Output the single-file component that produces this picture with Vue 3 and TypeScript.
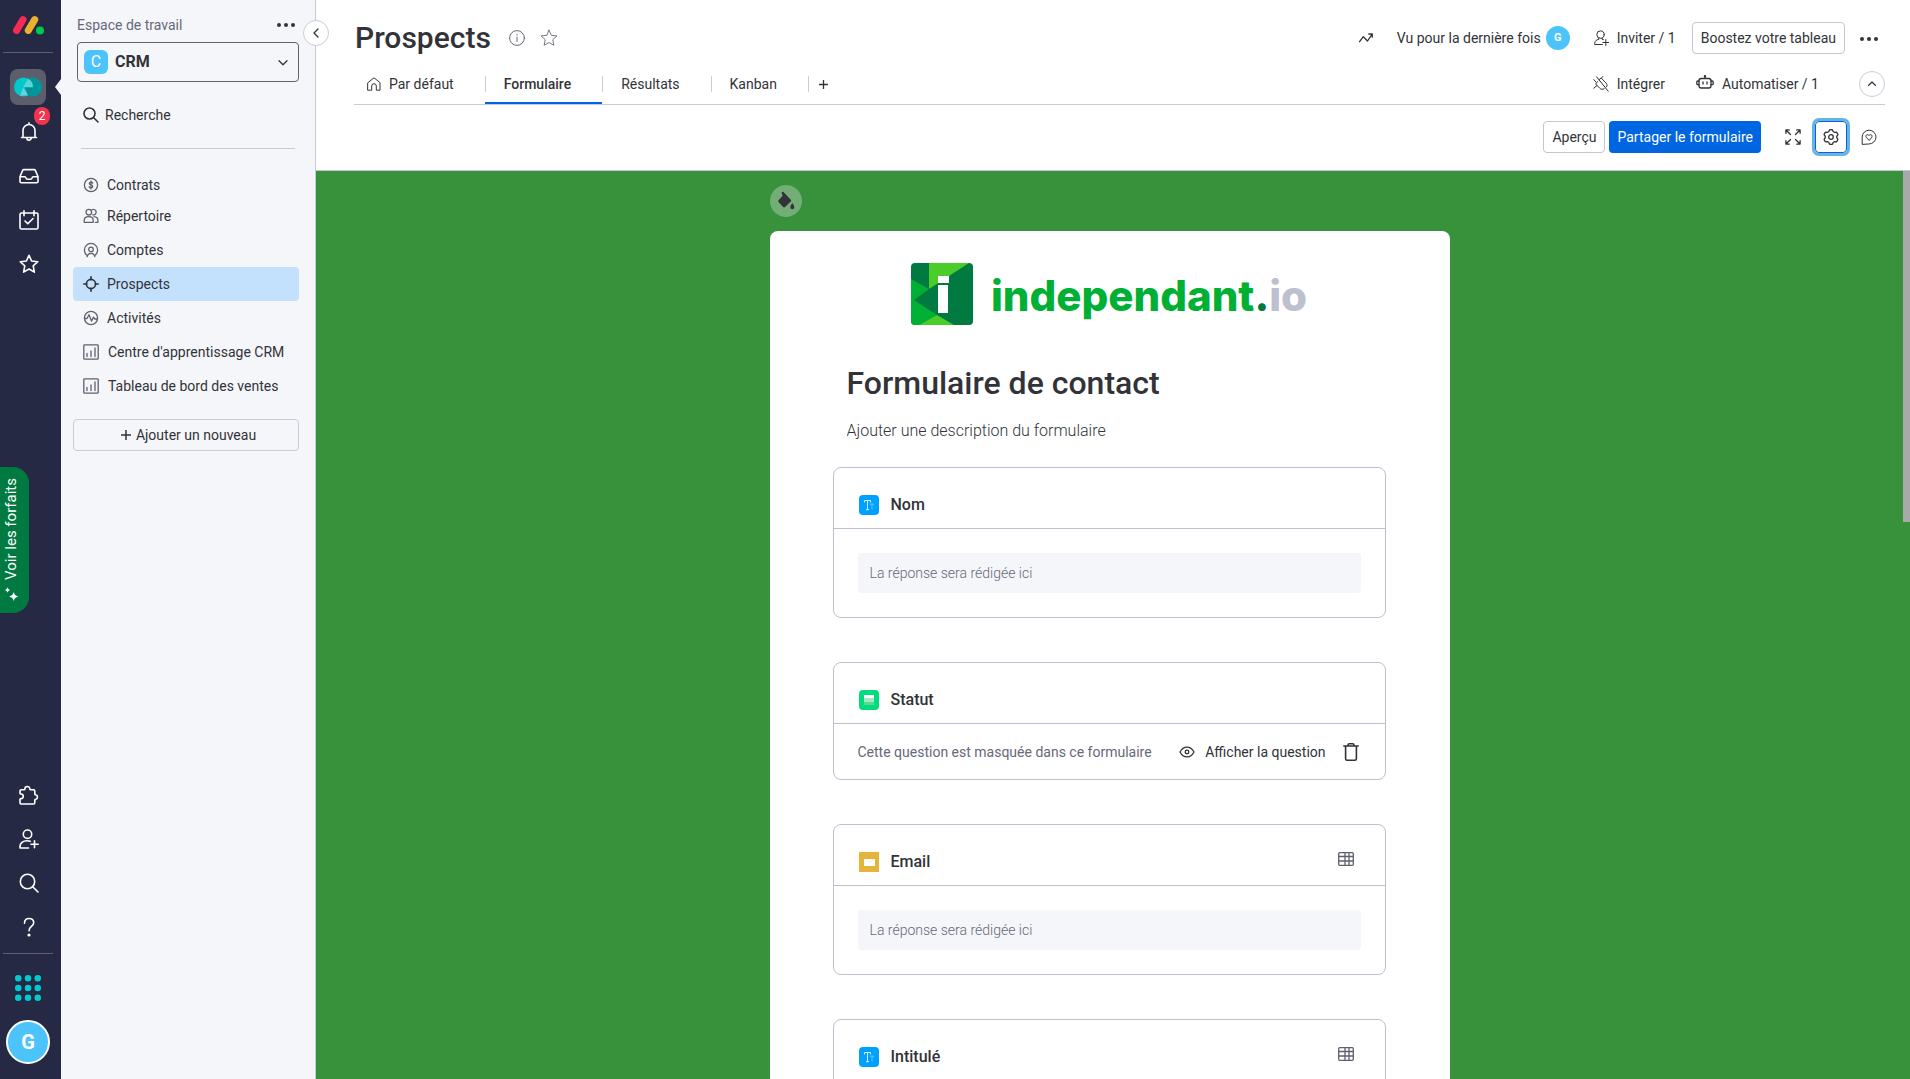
<script setup lang="ts">
import { ref } from 'vue'

interface BoardLink { label: string; icon: string }
interface Question { label: string; kind: 'text' | 'status' | 'email'; hidden?: boolean; table?: boolean }

const workspace = ref('CRM')
const boards: BoardLink[] = [
  { label: 'Contrats', icon: 'deal' },
  { label: 'Répertoire', icon: 'people' },
  { label: 'Comptes', icon: 'account' },
  { label: 'Prospects', icon: 'target' },
  { label: 'Activités', icon: 'pulse' },
  { label: "Centre d'apprentissage CRM", icon: 'chart' },
  { label: 'Tableau de bord des ventes', icon: 'chart' },
]
const current = 'Prospects'

const tabs: string[] = ['Par défaut', 'Formulaire', 'Résultats', 'Kanban']
const activeTab = ref('Formulaire')

const questions: Question[] = [
  { label: 'Nom', kind: 'text' },
  { label: 'Statut', kind: 'status', hidden: true },
  { label: 'Email', kind: 'email', table: true },
  { label: 'Intitulé', kind: 'text', table: true },
]
const appDots = [0, 1, 2].flatMap((r) => [0, 1, 2].map((c) => ({ x: 3 + c * 9, y: 3 + r * 9 })))

// Six-lobed cog centred on (8, 8): each lobe has two outer corners and shares a valley with the next.
function polar(radius: number, degrees: number): string {
  const a = (degrees * Math.PI) / 180
  return `${(8 + radius * Math.cos(a)).toFixed(2)} ${(8 + radius * Math.sin(a)).toFixed(2)}`
}
const cog = 'M' + [0, 1, 2, 3, 4, 5].map((k) => {
  const mid = k * 60 - 90
  return `${polar(5.8, mid - 24)}L${polar(7.3, mid - 11)}Q${polar(7.7, mid)} ${polar(7.3, mid + 11)}L${polar(5.8, mid + 24)}`
}).join('L') + 'z'
</script>

<template>
  <div class="app">
    <nav class="rail" aria-label="Navigation principale">
      <div class="rail-top">
        <svg class="logo" width="32" height="20" viewBox="0 0 32 20" aria-label="monday">
          <path d="M4.600 15.400 L11 4.600" stroke="#f62b54" stroke-width="7" stroke-linecap="round" />
          <path d="M16.300 15.400 L22.700 4.600" stroke="#ecb02f" stroke-width="7" stroke-linecap="round" />
          <circle cx="28" cy="15.600" r="4" fill="#00ca4e" />
        </svg>
        <hr class="rail-line" />
        <button class="product" aria-label="CRM">
          <svg width="28" height="20" viewBox="0 0 28 20">
            <circle cx="18.500" cy="10" r="9.500" fill="#00979c" />
            <circle cx="9.500" cy="10" r="9.500" fill="#00c8cc" />
            <path d="M14 1.700A9.500 9.500 0 0 1 19 10H9.200z" fill="#5bd4d8" />
            <path d="M9.200 10.500 14 18.300 6 18.700z" fill="#6ccfdb" />
            <path d="M11 10.500h8a9.500 9.500 0 0 1-5 7.800z" fill="#0a8c92" />
          </svg>
        </button>
        <button class="rail-btn" aria-label="Notifications">
          <svg width="20" height="20" viewBox="0 0 20 20" class="ln"><path d="M2.500 15.500h15M4 15.500V8.500a6 6 0 0 1 12 0v7M10 2.300V.8M7.800 16a2.200 2.200 0 0 0 4.400 0" /></svg>
          <span class="badge">2</span>
        </button>
        <button class="rail-btn" aria-label="Boîte de réception">
          <svg width="20" height="20" viewBox="0 0 20 20" class="ln"><path d="M1 10.500 3.700 4.400a1.300 1.300 0 0 1 1.200-.8h10.200a1.300 1.300 0 0 1 1.200.8L19 10.500v5a1.300 1.300 0 0 1-1.300 1.300H2.300A1.300 1.300 0 0 1 1 15.500zM1 10.800h4.800c.6 0 .9.4 1 .9.200 1 .9 1.600 1.900 1.600h2.600c1 0 1.700-.6 1.900-1.600.1-.5.4-.9 1-.9H19" /></svg>
        </button>
        <button class="rail-btn" aria-label="Mon travail">
          <svg width="20" height="20" viewBox="0 0 20 20" class="ln"><rect x="1" y="3" width="18" height="16" rx="1.500" /><path d="M5 .800v5M15 .800v5M6 11l2.800 2.800L14 8.500" /></svg>
        </button>
        <button class="rail-btn" aria-label="Favoris">
          <svg width="20" height="20" viewBox="0 0 20 20" class="ln"><path d="m10 1.300 2.600 5.700 6.200.7-4.600 4.200 1.200 6.200L10 15l-5.400 3.100 1.200-6.200L1.200 7.700l6.200-.7z" /></svg>
        </button>
      </div>
      <div class="rail-bottom">
        <button class="rail-btn" aria-label="Applications">
          <svg width="20" height="20" viewBox="0 0 20 20" class="ln"><path d="M2.300 19a1.300 1.300 0 0 1-1.300-1.300V14.300c0-.500.500-.700 1-.700a2.300 2.300 0 0 0 0-4.600c-.500 0-1-.200-1-.700V6c0-.7.500-1.200 1.200-1.200h3c.500 0 .700-.400.700-.800a2.500 2.500 0 0 1 5 0c0 .400.200.800.700.8h3c.700 0 1.200.5 1.200 1.200v3c0 .500.400.700.800.7a2.400 2.400 0 0 1 0 4.700c-.4 0-.8.200-.8.700v2.600a1.300 1.300 0 0 1-1.300 1.300z" /></svg>
        </button>
        <button class="rail-btn" aria-label="Inviter des membres">
          <svg width="20" height="20" viewBox="0 0 20 20" class="ln"><circle cx="8.500" cy="5.200" r="4.200" /><path d="M9.500 19H1v-1.500c0-3.500 3-5.800 7-5.800 1.200 0 2.300.2 3.200.6M15.500 11.800v7M12 15.300h7.200" /></svg>
        </button>
        <button class="rail-btn" aria-label="Rechercher">
          <svg width="20" height="20" viewBox="0 0 20 20" class="ln"><circle cx="8.500" cy="8.500" r="7.200" /><path d="m13.700 13.700 5.300 5.300" /></svg>
        </button>
        <button class="rail-btn" aria-label="Aide">
          <svg width="20" height="20" viewBox="0 0 20 20" class="ln"><path d="M5.500 6.200C5.500 3.500 7.300 1.500 10 1.500s4.700 1.700 4.700 4.200c0 4-4.700 3.600-4.700 8" /><circle cx="10" cy="18" r=".8" /></svg>
        </button>
        <hr class="rail-line" />
        <button class="apps" aria-label="Produits">
          <svg width="26" height="26" viewBox="0 0 24 24"><circle v-for="(d, i) in appDots" :key="i" :cx="d.x" :cy="d.y" r="3" fill="#00cccf" /></svg>
        </button>
        <button class="me" aria-label="Profil">G</button>
      </div>
      <button class="plans">
        <svg width="15" height="15" viewBox="0 0 14 15" fill="#fff"><path d="M9.200 5c.8 2.800 1.700 3.700 4.500 4.500-2.800.8-3.700 1.700-4.500 4.500-.8-2.800-1.700-3.700-4.500-4.500C7.500 8.700 8.400 7.800 9.200 5zM3 .2c.5 1.700 1.100 2.300 2.800 2.800C4.100 3.500 3.500 4.100 3 5.800 2.500 4.100 1.900 3.500.2 3 1.900 2.500 2.500 1.900 3 .2z" /></svg>
        <span>Voir les forfaits</span>
      </button>
    </nav>

    <aside class="side">
      <div class="side-head">
        <label for="workspace">Espace de travail</label>
        <button class="dots" aria-label="Options"><i /><i /><i /></button>
      </div>
      <div class="space">
        <span class="space-mark">C</span>
        <select id="workspace" v-model="workspace"><option>CRM</option></select>
        <svg width="10" height="6" viewBox="0 0 10 6" class="ln"><path d="m1 .8 4 4 4-4" /></svg>
      </div>
      <label class="search">
        <svg width="16" height="16" viewBox="0 0 16 16" class="ln"><circle cx="6.500" cy="6.500" r="5.500" /><path d="m10.700 10.700 4.300 4.300" /></svg>
        <input type="text" placeholder="Recherche" aria-label="Recherche" />
      </label>
      <hr class="side-line" />
      <ul class="boards">
        <li v-for="b in boards" :key="b.label">
          <a href="#" :class="{ on: b.label === current, wide: b.icon === 'chart' }">
            <svg width="16" height="16" viewBox="0 0 16 16" class="ln">
              <template v-if="b.icon === 'deal'"><circle cx="8" cy="8" r="6.600" /><path d="M9.700 6.200C9.500 5.500 8.900 5.200 8 5.200c-1 0-1.700.5-1.700 1.300 0 .9.800 1.200 1.700 1.400.9.200 1.700.6 1.700 1.500 0 .8-.7 1.400-1.700 1.400S6.400 10.400 6.200 9.700M8 4v8" /></template>
              <template v-else-if="b.icon === 'people'"><circle cx="5.800" cy="4.200" r="2.800" /><path d="M9.200 1.600a2.800 2.800 0 1 1 .6 5.300M1.200 14.300v-2c0-2.200 1.900-3.700 4.500-3.700s4.500 1.500 4.500 3.700v2zM11 8.700c2.200.2 3.900 1.600 3.900 3.700v1.900h-2.500" /></template>
              <template v-else-if="b.icon === 'account'"><path d="M4 13.300a6.600 6.600 0 1 1 8 0" /><circle cx="8" cy="7.400" r="2.300" /><path d="M4.200 14.700c.3-2 1.800-3.400 3.800-3.400s3.500 1.400 3.800 3.400" /></template>
              <template v-else-if="b.icon === 'target'"><circle cx="8" cy="8" r="4.600" class="bold" /><path d="M8 .8v3M8 12.200v3M.8 8h3M12.200 8h3" class="bold" /></template>
              <template v-else-if="b.icon === 'pulse'"><circle cx="8" cy="8" r="6.600" /><path d="M2 8.500h2l2-3.800 2.500 6.400 2-4L11.700 9H14" /></template>
              <template v-else><rect x=".800" y=".800" width="14.400" height="14.400" rx=".800" /><path d="M4 9.500v3M8 7v5.500M12 4v8.500" /></template>
            </svg>
            <span>{{ b.label }}</span>
          </a>
        </li>
      </ul>
      <button class="add-new">
        <svg width="10" height="10" viewBox="0 0 10 10" class="ln"><path d="M5 .3v9.400M.3 5h9.400" /></svg>
        Ajouter un nouveau
      </button>
      <button class="fold" aria-label="Réduire le menu">
        <svg width="6" height="10" viewBox="0 0 6 10" class="ln"><path d="m5 1-4 4 4 4" /></svg>
      </button>
    </aside>

    <main class="main">
      <header class="head">
        <div class="title-row">
          <h1>Prospects</h1>
          <button class="icon-btn" aria-label="Informations">
            <svg width="16" height="16" viewBox="0 0 16 16" class="ln thin"><circle cx="8" cy="8" r="7.400" /><path d="M8 7v4.500M8 4.300v.6" /></svg>
          </button>
          <button class="icon-btn" aria-label="Ajouter aux favoris">
            <svg width="18" height="18" viewBox="0 0 20 20" class="ln thin"><path d="m10 1.300 2.600 5.700 6.200.7-4.600 4.200 1.200 6.200L10 15l-5.400 3.100 1.200-6.200L1.200 7.700l6.200-.7z" /></svg>
          </button>
          <div class="title-actions">
            <button class="flat activity" aria-label="Activité">
              <svg width="14" height="10" viewBox="0 0 14 10" class="ln"><path d="m.6 8.700 3.700-5L8.500 8 13 1.300M9.800 1h3.500v3.200" /></svg>
            </button>
            <button class="flat seen">Vu pour la dernière fois <span class="mini">G</span></button>
            <button class="flat invite">
              <svg width="15" height="16" viewBox="0 0 15 16" class="ln thin"><circle cx="6.500" cy="4.600" r="3.700" /><path d="M8.500 14.500H.7v-1.300c0-2.200 1.800-3.500 4.200-3.900v-1M8 8.300v.9l1.500.5M11.800 9.500v6M8.900 12.500h5.800" /></svg>
              Inviter / 1
            </button>
            <button class="outlined boost">Boostez votre tableau</button>
            <button class="dots" aria-label="Plus d'options"><i /><i /><i /></button>
          </div>
        </div>
        <div class="tab-row">
          <div class="tabs" role="tablist">
            <button v-for="t in tabs" :key="t" role="tab" class="tab" :class="{ active: t === activeTab }" :aria-selected="t === activeTab" @click="activeTab = t">
              <svg v-if="t === 'Par défaut'" width="14" height="14" viewBox="0 0 14 14" class="ln thin"><path d="M1 5.600 7 .8l6 4.800v7.600H9.300V9a2.300 2.300 0 0 0-4.600 0v4.200H1z" /></svg>
              {{ t }}
            </button>
            <button class="tab plus" aria-label="Ajouter une vue"><svg width="9" height="9" viewBox="0 0 9 9" class="ln"><path d="M4.500.3v8.400M.3 4.500h8.400" /></svg></button>
          </div>
          <div class="tab-actions">
            <button class="flat">
              <svg width="16" height="16" viewBox="0 0 16 16" class="ln thin"><path d="M6 3.700 8.200 2l5 5.200c1.100 1.200 1.100 2.700.2 3.800M11 12.800c-1.400.9-3.100.6-4.300-.6L2.700 8 4.500 5.600M.8 3.600 3 6M3.600.8 15.200 15.200M.8 12.200l3.200-2.600M8.500 2l1.200-1.400" /></svg>
              Intégrer
            </button>
            <button class="flat auto">
              <svg width="18" height="16" viewBox="0 0 18 16" class="ln"><rect x="3" y="3.500" width="12" height="9.500" rx="2.200" /><path d="M9 3.300V1.600M3 6H1.800a1 1 0 0 0-1 1v1.700a1 1 0 0 0 1 1H3M15 6h1.200a1 1 0 0 1 1 1v1.700a1 1 0 0 1-1 1H15M7 7v2M11 7v2" /><circle cx="9" cy="1.200" r=".600" /></svg>
              Automatiser / 1
            </button>
            <button class="round" aria-label="Réduire l'en-tête"><svg width="8" height="5" viewBox="0 0 8 5" class="ln"><path d="m.7 4.300 3.300-3.300 3.300 3.300" /></svg></button>
          </div>
        </div>
      </header>

      <div class="toolbar">
        <button class="outlined">Aperçu</button>
        <button class="primary">Partager le formulaire</button>
        <button class="icon-btn expand" aria-label="Plein écran">
          <svg width="16" height="16" viewBox="0 0 16 16" class="ln"><path d="M.9 4.300V.9h3.400M11.700.9h3.400v3.400M15.100 11.700v3.400h-3.400M4.300 15.100H.9v-3.400M1.200 1.200l4.300 4.300M14.800 1.200l-4.300 4.300M14.800 14.800l-4.300-4.300M1.200 14.800l4.300-4.300" /></svg>
        </button>
        <button class="gear" aria-label="Paramètres">
          <svg width="16" height="16" viewBox="0 0 16 16" class="ln"><circle cx="8" cy="8" r="2.300" /><path :d="cog" /></svg>
        </button>
        <button class="icon-btn" aria-label="Commentaires">
          <svg width="16" height="16" viewBox="0 0 16 16" class="ln thin"><path d="M1.200 15V8a6.900 6.900 0 1 1 6.900 7z" /><path d="M8 11.200 5.300 8.400c-.8-.9-.5-2.400.8-2.700.8-.2 1.500.2 1.900.9.400-.7 1.100-1.100 1.900-.9 1.300.3 1.600 1.800.8 2.700z" /></svg>
        </button>
      </div>

      <section class="canvas">
        <div class="column">
          <button class="paint" aria-label="Couleur d'arrière-plan">
            <svg width="18" height="20" viewBox="0 0 18 20" fill="#323338"><path d="M4.500 1.500 6 .5l8 8.500c.4.500.3.900 0 1.200L8 16c-.6.600-1.200.6-1.800 0L1.500 11c-.5-.6-.5-1.100 0-1.700l4.200-4.500z" /><path d="M15.300 12c1.200 1.800 2 2.900 2 4.300a2 2 0 0 1-4 0c0-1.400.9-2.500 2-4.300z" /></svg>
          </button>
          <form class="sheet" @submit.prevent>
            <div class="brand">
              <svg width="62" height="62" viewBox="0 0 62 62">
                <clipPath id="tile"><rect width="62" height="62" rx="4" /></clipPath>
                <g clip-path="url(#tile)">
                  <rect width="62" height="62" fill="#007a41" />
                  <path d="M0 16 18 26 3 37 26 52 8 62H0z" fill="#00b035" />
                  <path d="M18 0h40L38 13 18 26z" fill="#4acd29" />
                  <path d="M26 52 43 62H8z" fill="#4acd29" />
                  <path d="M27 13h11v7H27zM27 22h10v28H27z" fill="#fff" />
                </g>
              </svg>
              <span class="word">independant<b>.</b><i>io</i></span>
            </div>
            <h2>Formulaire de contact</h2>
            <input class="desc" type="text" placeholder="Ajouter une description du formulaire" aria-label="Description du formulaire" />

            <fieldset v-for="(q, i) in questions" :key="q.label" class="question">
              <div class="q-head">
                <svg v-if="q.kind === 'text'" width="20" height="20" viewBox="0 0 20 20"><rect width="20" height="20" rx="4" fill="#00a0ff" /><path d="M5.500 7.500v-2h6v2M8.500 5.500v9.200M7 14.700h3" fill="none" stroke="#d9f1ff" /><path d="M11.500 10V9h3v1M13 9v5.500" fill="none" stroke="#5cc2ff" /></svg>
                <svg v-else-if="q.kind === 'status'" width="20" height="20" viewBox="0 0 20 20"><rect width="20" height="20" rx="4" fill="#00dc7d" /><path d="M5 5h10v3H5z" fill="#fff" /><path d="M5 8h10v4H5z" fill="#a3e6bf" /><path d="M5 12h10v3H5z" fill="#5fd693" /></svg>
                <svg v-else width="20" height="20" viewBox="0 0 20 20"><rect width="20" height="20" fill="#e5b53b" /><path d="M5 7h11v7H5z" fill="#fff" /><path d="m6.500 7.500 4 3 4-3" fill="none" stroke="#f3dfa5" stroke-width=".600" /></svg>
                <label :for="'q' + i">{{ q.label }}</label>
                <button v-if="q.table" type="button" class="grid-btn" aria-label="Colonne associée">
                  <svg width="16" height="14" viewBox="0 0 16 14" class="ln"><rect x=".700" y=".700" width="14.600" height="12.600" rx="1" /><path d="M.7 4.500h14.600M.7 9h14.600M7 .7v12.600M11 .7v12.600" /></svg>
                </button>
              </div>
              <div v-if="q.hidden" class="q-hidden">
                <output :id="'q' + i">Cette question est masquée dans ce formulaire</output>
                <button type="button" class="flat show">
                  <svg width="16" height="12" viewBox="0 0 16 12" class="ln"><path d="M1 6c1.600-3 4-4.900 7-4.900S13.400 3 15 6c-1.600 3-4 4.900-7 4.900S2.600 9 1 6z" /><circle cx="8" cy="6" r="1.800" /></svg>
                  Afficher la question
                </button>
                <button type="button" class="icon-btn" aria-label="Supprimer">
                  <svg width="16" height="18" viewBox="0 0 16 18" class="ln bold"><path d="M.8 3h14.400M2.600 3.200v12.500a1.500 1.500 0 0 0 1.500 1.500h7.800a1.500 1.500 0 0 0 1.500-1.500V3.200M5 2.800V2a1.200 1.200 0 0 1 1.200-1.200h3.600A1.200 1.200 0 0 1 11 2v.8" /></svg>
                </button>
              </div>
              <div v-else class="q-body"><input :id="'q' + i" type="text" placeholder="La réponse sera rédigée ici" readonly /></div>
            </fieldset>
          </form>
        </div>
        <div class="thumb"></div>
      </section>
    </main>
  </div>
</template>

<style>
html, body { margin: 0; height: 100%; }
</style>

<style scoped>
* { box-sizing: border-box; }
.app { display: flex; height: 100vh; overflow: hidden; background: #fff; color: #323338; font: 14px/20px Roboto, "Liberation Sans", sans-serif; }
button, input, select { font: inherit; color: inherit; margin: 0; }
button { display: flex; align-items: center; justify-content: center; padding: 0; border: 0; background: none; cursor: pointer; white-space: nowrap; }
svg { display: block; flex: none; }
hr { border: 0; height: 1px; margin: 0; }
.ln { fill: none; stroke: currentColor; stroke-width: 1.300; stroke-linecap: round; stroke-linejoin: round; }
.thin { stroke-width: 1; }
.bold { stroke-width: 1.600; }

.rail { position: relative; flex: none; display: flex; flex-direction: column; justify-content: space-between; width: 61px; padding: 15px 5px 15px 0; background: #252943; color: #fff; }
.rail-top, .rail-bottom { display: flex; flex-direction: column; align-items: center; }
.rail-line { width: 50px; background: #5e616d; }
.logo { margin-bottom: 17px; }
.product { width: 36px; height: 36px; margin: 16px 0 5px; border-radius: 8px; background: #5c5f6b; }
.rail-btn { position: relative; width: 44px; height: 44px; padding: 0 0 1px 1px; }
.rail-btn .ln { stroke-width: 1.600; }
.badge { position: absolute; top: -3px; right: 0; width: 16px; height: 18px; border-radius: 9px; background: #f5334f; font-size: 12px; line-height: 18px; }
.rail-bottom .rail-line { margin-top: 4px; }
.apps { width: 44px; height: 44px; margin: 12px 0 10px; }
.me { width: 44px; height: 44px; border: 2px solid #fff; border-radius: 50%; background: #4cc3fb; font-size: 20px; font-weight: 700; }
.plans { position: absolute; left: 0; top: 467px; flex-direction: column-reverse; gap: 7px; width: 29px; height: 146px; padding: 0 7px 0 0; border-radius: 0 16px 16px 0; background: #007a41; }
.plans span { writing-mode: vertical-rl; rotate: 180deg; font-size: 15px; }

.side { position: relative; flex: none; display: flex; flex-direction: column; width: 255px; padding: 15px 16px 0 12px; border-right: 1px solid #c8cbdc; background: #f5f6fa; }
.side::before { content: ""; position: absolute; left: -6px; top: 79px; border: solid transparent; border-width: 8px 6px 8px 0; border-right-color: #f5f6fa; }
.side-head { display: flex; justify-content: space-between; align-items: center; padding: 0 4px; color: #676879; }
.dots { gap: 3px; height: 20px; color: #323338; }
.dots i { width: 4px; height: 4px; border-radius: 50%; background: #323338; }
.space { position: relative; height: 40px; margin: 7px 0 0 4px; }
.space select { appearance: none; width: 100%; height: 40px; padding: 0 30px 0 37px; border: 1px solid #60626c; border-radius: 4px; background: transparent; font-size: 16px; font-weight: 700; }
.space-mark { position: absolute; left: 7px; top: 8px; width: 24px; height: 24px; border-radius: 6px; background: #4cc3fb; color: #fff; font-size: 16px; line-height: 24px; text-align: center; }
.space svg { position: absolute; right: 11px; top: 18px; pointer-events: none; }
.search { display: flex; align-items: center; gap: 6px; height: 32px; margin: 17px 10px 0; }
.search .ln { stroke-width: 1.600; }
.search input { flex: 1; min-width: 0; padding: 0; border: 0; background: none; }
.search input::placeholder { color: #323338; opacity: 1; }
.side-line { margin: 17px 4px 22px 8px; background: #c8cbdc; }
.boards { margin: 0; padding: 0; list-style: none; }
.boards a { display: flex; align-items: center; gap: 8px; height: 34px; padding: 0 10px; border-radius: 4px; color: #323338; text-decoration: none; white-space: nowrap; }
.boards li:first-child a { height: 28px; }
.boards a.wide { gap: 9px; }
.boards svg { color: #5f616e; }
.boards .on { background: #c3e1fc; }
.boards .on svg { color: #323338; }
.add-new { gap: 5px; height: 32px; margin-top: 16px; padding-left: 5px; border: 1px solid #c8cbdc; border-radius: 4px; }
.add-new .ln { stroke-width: 1.500; }
.fold { position: absolute; z-index: 2; top: 20px; right: -14px; width: 26px; height: 26px; border: 1px solid #c8cbdc; border-radius: 50%; background: #fff; }

.main { flex: 1; min-width: 0; display: flex; flex-direction: column; }
.head { padding: 22px 25px 0 38px; }
.title-row { display: flex; align-items: center; height: 32px; }
h1 { margin: 0 18px 0 1px; font-size: 30px; line-height: 32px; font-weight: 500; }
.icon-btn { color: #323338; }
.title-row > .icon-btn { margin-right: 15px; color: #676879; }
.title-actions { display: flex; align-items: center; margin-left: auto; }
.flat { gap: 8px; height: 32px; }
.activity { margin-right: 24px; }
.seen { gap: 5px; }
.mini { width: 24px; height: 24px; border-radius: 50%; background: #4cc3fb; color: #fff; font-size: 11px; line-height: 24px; font-weight: 700; }
.invite { margin: 0 16px 0 24px; }
.outlined { height: 32px; padding: 0 8px; border: 1px solid #c3c6d4; border-radius: 4px; }
.title-actions .dots { margin: 2px 7px 0 15px; }
.tab-row { display: flex; justify-content: space-between; height: 51px; border-bottom: 1px solid #c8cbdc; }
.tabs { display: flex; }
.tab { position: relative; gap: 8px; height: 50px; padding: 10px 31px 0 19px; }
.tab:first-child { padding: 10px 31px 0 13px; }
.tab:not(:first-child)::before { content: ""; position: absolute; left: 0; top: 22px; width: 1px; height: 16px; background: #c8cbdc; }
.tab.active { font-weight: 500; border-bottom: 2px solid #0065e0; padding-top: 12px; }
.tab.plus { padding: 10px 6px 0 11px; }
.tab-actions { display: flex; align-items: center; padding-top: 9px; }
.auto { margin: 0 40px 0 31px; }
.auto svg { margin-bottom: 2px; }
.round { width: 26px; height: 26px; border: 1px solid #c8cbdc; border-radius: 50%; }

.toolbar { display: flex; align-items: center; justify-content: flex-end; height: 66px; padding: 0 33px 1px 0; border-bottom: 1px solid #c3c6d4; }
.primary { height: 32px; margin: 0 24px 0 4px; padding: 0 8px; border-radius: 4px; background: #0065e0; color: #fff; }
.gear { width: 32px; height: 32px; margin: 0 14px; border: 1px solid #0065e0; border-radius: 4px; box-shadow: 0 0 0 3px #6bb3df; }

.canvas { position: relative; flex: 1; min-height: 0; padding-right: 7px; overflow: hidden; background: #38913b; }
.thumb { position: absolute; top: 0; right: 0; width: 7px; height: 351px; background: #a9a9ab; }
.column { width: 680px; margin: 0 auto; padding-top: 14px; }
.paint { width: 32px; height: 32px; border-radius: 50%; background: #74ae77; }
.sheet { margin-top: 14px; padding: 32px 64px 64px 63px; border-radius: 8px; background: #fff; }
.brand { display: flex; align-items: center; justify-content: center; gap: 18px; height: 62px; }
.word { padding-top: 4px; font: 800 42px/62px Inter, sans-serif; color: #00b035; }
.word b { color: #007a41; font-weight: inherit; }
.word i { color: #bdc0cf; font-style: normal; }
h2 { margin: 38px 0 0 14px; font-size: 32px; line-height: 40px; font-weight: 500; }
.desc { display: block; width: 525px; height: 24px; margin: 15px 0 25px 14px; padding: 0; border: 0; font-size: 16px; font-weight: 300; }
.desc::placeholder { color: #323338; opacity: 1; }
.question { margin: 0 0 44px; padding: 0; border: 1px solid #bdc0cf; border-radius: 8px; }
.q-head { display: flex; align-items: center; height: 61px; padding: 13px 31px 0 25px; border-bottom: 1px solid #bdc0cf; }
.q-head label { flex: 1; margin-left: 12px; font-size: 16px; font-weight: 500; }
.grid-btn { margin-bottom: 6px; color: #5f616e; }
.q-body { padding: 24px; }
.q-body input { display: block; width: 100%; height: 40px; padding: 0 12px; border: 0; border-radius: 3px; background: #f5f6fa; font-weight: 300; }
.q-body input::placeholder { color: #676879; opacity: 1; }
.q-hidden { display: flex; align-items: center; height: 55px; padding: 0 26px 0 24px; color: #676879; }
.q-hidden button { color: #323338; }
.show { gap: 10px; margin: 0 17px 0 auto; }
</style>
